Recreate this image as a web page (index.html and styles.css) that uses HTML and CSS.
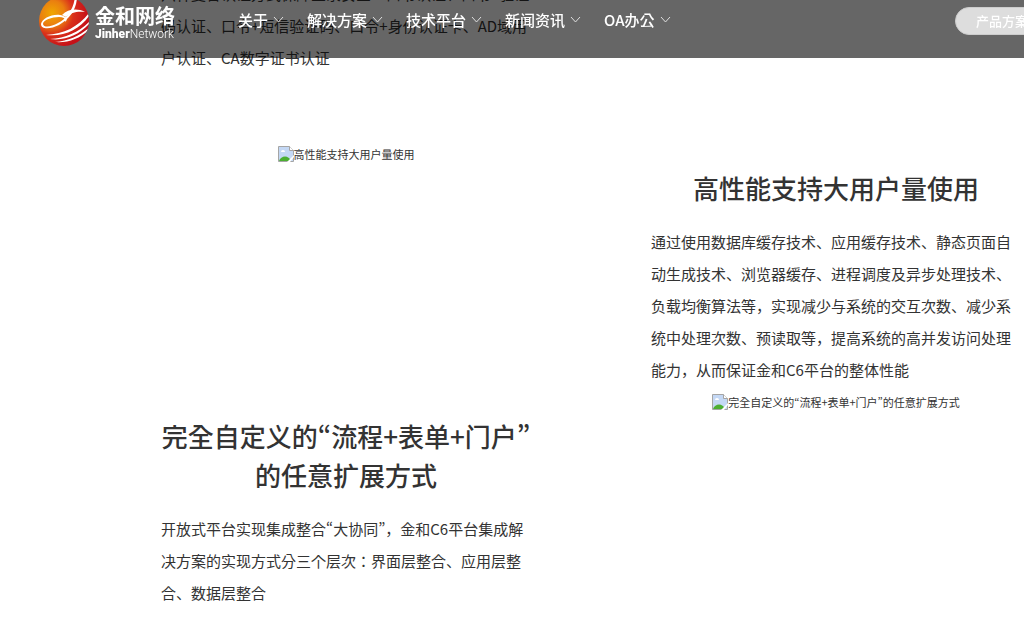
FILE: index.html
```html
<!DOCTYPE html>
<html lang="ko">
<head>
<meta charset="utf-8">
<title>金和网络</title>
<link rel="stylesheet" href="styles.css">
</head>
<body>
<header class="header">
  <a class="logo" href="#" aria-label="金和网络 Jinher Network">
    <svg class="logo-mark" viewBox="0 0 50 50" aria-hidden="true">
      <defs>
        <radialGradient id="ball" cx="26%" cy="34%" r="72%">
          <stop offset="0" stop-color="#f0a800"/><stop offset=".35" stop-color="#ea7e10"/><stop offset=".6" stop-color="#d9301b"/><stop offset="1" stop-color="#c51018"/>
        </radialGradient>
        <clipPath id="disc"><circle cx="25" cy="21" r="25"/></clipPath>
      </defs>
      <circle cx="25" cy="21" r="25" fill="url(#ball)"/>
      <g clip-path="url(#disc)" fill="#fff">
        <path d="M36-4C35 8 29 18 19 23C12 27 5 28 4 24C4 20 13 17 20 17C25 17 27 19 26 22C30 19 27 16 21 15C12 14 3 19 2 24C2 30 12 29 20 25C32 18 38 8 38-4z"/>
        <path d="M23 15C29 9 38 8 46 12C39 11 32 12 27 17z"/>
        <path d="M7 35C25 34 39 27 50 13L50 16C40 30 25 37 7 35z"/>
        <path d="M11 39C27 38 40 32 51 21L51 23C40 35 27 41 11 39z"/>
        <path d="M16 42C29 41 40 36 50 28L50 30C40 39 29 43 16 42z"/>
      </g>
    </svg>
    <span class="logo-text">
      <span class="logo-cn">金和网络</span>
      <span class="logo-en"><b>Jinher</b>Network</span>
    </span>
  </a>
  <nav class="nav">
    <a href="#">关于<svg class="chevron" viewBox="0 0 11 8"><path d="M1 1l4.500 5 4.500-5"/></svg></a>
    <a href="#">解决方案<svg class="chevron" viewBox="0 0 11 8"><path d="M1 1l4.500 5 4.500-5"/></svg></a>
    <a href="#">技术平台<svg class="chevron" viewBox="0 0 11 8"><path d="M1 1l4.500 5 4.500-5"/></svg></a>
    <a href="#">新闻资讯<svg class="chevron" viewBox="0 0 11 8"><path d="M1 1l4.500 5 4.500-5"/></svg></a>
    <a href="#">OA办公<svg class="chevron" viewBox="0 0 11 8"><path d="M1 1l4.500 5 4.500-5"/></svg></a>
  </nav>
  <button class="product" type="button">产品方案</button>
</header>
<main class="features">
  <p class="desc intro">六种复合认证方式保障登录安全：口令认证、口令+验证码认证、口令+短信验证码、口令+身份认证卡、AD域用户认证、CA数字证书认证</p>
  <figure class="shot shot-left"><svg class="broken" viewBox="0 0 16 16"><path d="M.5.5h11l4 4v11H.5z" fill="#c4d8f5" stroke="#a5a5a5"/><path d="M11.500.5v4h4" fill="#fff" stroke="#a5a5a5"/><path d="M3 6a2 2 0 0 1 4 0z" fill="#fff"/><path d="M1 15c2-6 10-6 12 0z" fill="#4caf32"/><path d="M9 16l7-7v2l-4 5z" fill="#fff"/></svg>高性能支持大用户量使用</figure>
  <section class="text text-right">
    <h2 class="title">高性能支持大用户量使用</h2>
    <p class="desc">通过使用数据库缓存技术、应用缓存技术、静态页面自动生成技术、浏览器缓存、进程调度及异步处理技术、负载均衡算法等，实现减少与系统的交互次数、减少系统中处理次数、预读取等，提高系统的高并发访问处理能力，从而保证金和C6平台的整体性能</p>
  </section>
  <section class="text text-left">
    <h2 class="title">完全自定义的“流程+表单+门户”<wbr>的任意扩展方式</h2>
    <p class="desc">开放式平台实现集成整合“大协同”，金和C6平台集成解决方案的实现方式分三个层次：界面层整合、应用层整合、数据层整合</p>
  </section>
  <figure class="shot shot-right"><svg class="broken" viewBox="0 0 16 16"><path d="M.5.5h11l4 4v11H.5z" fill="#c4d8f5" stroke="#a5a5a5"/><path d="M11.500.5v4h4" fill="#fff" stroke="#a5a5a5"/><path d="M3 6a2 2 0 0 1 4 0z" fill="#fff"/><path d="M1 15c2-6 10-6 12 0z" fill="#4caf32"/><path d="M9 16l7-7v2l-4 5z" fill="#fff"/></svg>完全自定义的“流程+表单+门户”的任意扩展方式</figure>
</main>
</body>
</html>
```

FILE: styles.css
```css
* { box-sizing: border-box; }
body {
  margin: 0;
  overflow: hidden;
  color: #333;
  background: #fff;
  font-family: "Noto Sans CJK KR", sans-serif;
}
.header {
  position: fixed;
  inset: 0 0 auto 0;
  z-index: 1;
  display: flex;
  align-items: flex-start;
  height: 58px;
  padding-left: 39px;
  overflow: hidden;
  background: rgba(0, 0, 0, .6);
}
.logo { display: flex; flex: none; width: 199px; color: #fff; text-decoration: none; }
.logo-mark { width: 50px; height: 50px; }
.logo-text { display: flex; flex-direction: column; padding: 4px 0 0 6px; }
.logo-cn { font-size: 20px; line-height: 24px; font-weight: 700; }
.logo-en { font: 300 12px/12px Roboto, sans-serif; }
.logo-en b { font-weight: 900; }
.nav { display: flex; flex: none; gap: 23px; }
.nav a {
  display: flex;
  align-items: center;
  gap: 5px;
  color: #fff;
  font-size: 15px;
  line-height: 40px;
  font-weight: 500;
  text-decoration: none;
}
.chevron { width: 11px; height: 8px; fill: none; stroke: #ddd; }
.product {
  flex: none;
  height: 28px;
  margin: 7px -25px 0 auto;
  padding: 0 20px;
  border: 1px solid #ccc;
  border-radius: 14px;
  background: #ddd;
  color: #fff;
  font: 500 13px/26px "Noto Sans CJK KR", sans-serif;
}
.features {
  display: grid;
  grid-template-columns: 370fr 370fr;
  column-gap: 120px;
  margin: -22px 3px 0 161px;
}
.desc { margin: 0; font-size: 15px; line-height: 32px; }
.intro { grid-column: 1; margin-bottom: 71px; }
.shot { margin: 0; font-size: 11px; line-height: 18px; text-align: center; }
.shot-left { grid-column: 1; }
.shot-right { padding-top: 7px; }
.text-right { grid-column: 2; padding-top: 23px; }
.text-left { grid-column: 1; padding-top: 30px; }
.broken { width: 16px; height: 16px; vertical-align: text-bottom; }
.title { margin: 0 0 19px; font-size: 26px; line-height: 39px; font-weight: 500; text-align: center; }
```
